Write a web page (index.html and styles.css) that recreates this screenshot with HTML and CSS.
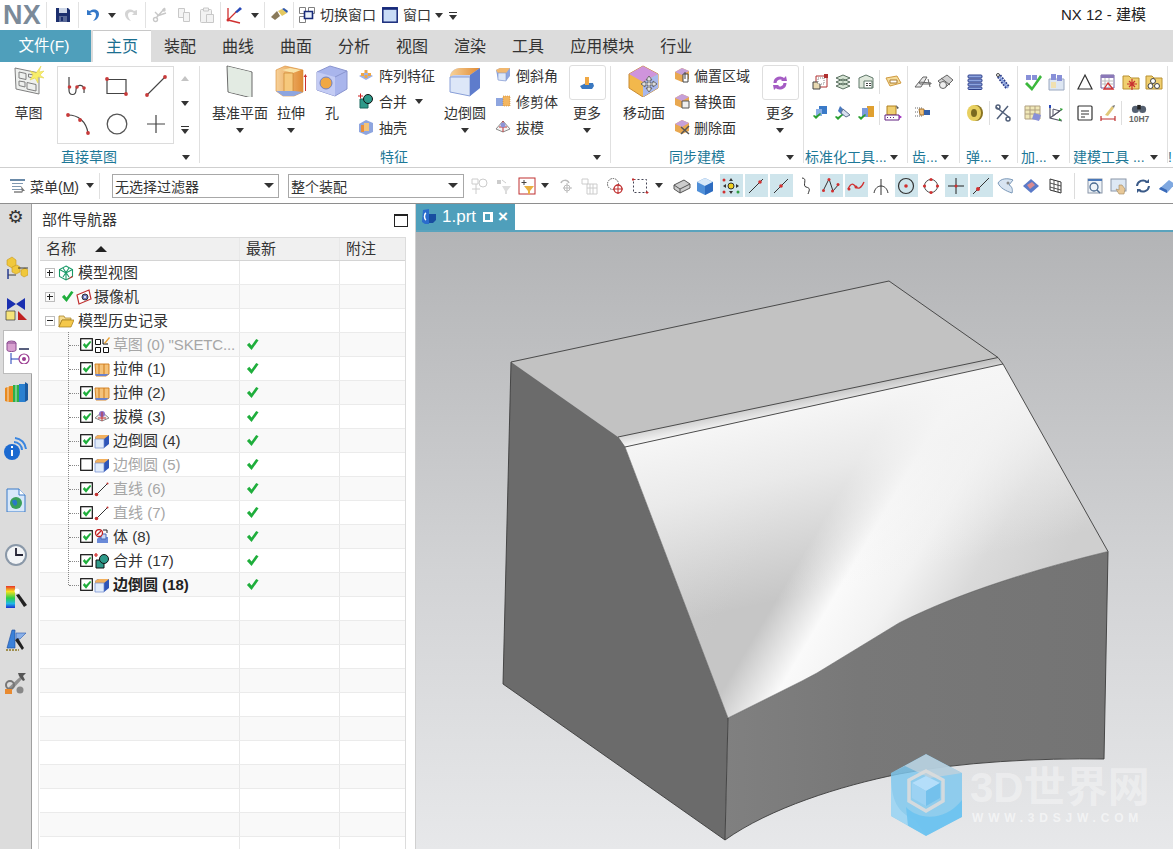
FILE: index.html
```html
<!DOCTYPE html>
<html lang="zh">
<head>
<meta charset="utf-8">
<title>NX 12 - 建模</title>
<link rel="stylesheet" href="styles.css">
</head>
<body>
<svg class="defs" width="0" height="0" aria-hidden="true">
<defs>
<linearGradient id="cubeTop" x1="0" y1="0" x2="0" y2="1"><stop offset="0" stop-color="#bcd0f4"/><stop offset="1" stop-color="#7b96dc"/></linearGradient>
<linearGradient id="amber" x1="0" y1="0" x2="1" y2="0"><stop offset="0" stop-color="#f7d29a"/><stop offset="1" stop-color="#e08a33"/></linearGradient>
<linearGradient id="rainbow" x1="0" y1="0" x2="0" y2="1"><stop offset="0" stop-color="#e8332a"/><stop offset=".25" stop-color="#f5e020"/><stop offset=".55" stop-color="#2bd04a"/><stop offset=".8" stop-color="#21b8e8"/><stop offset="1" stop-color="#1a2fd0"/></linearGradient>

<symbol id="save" viewBox="0 0 16 16"><path d="M1 1h12l2 2v12H1z" fill="#1c2f6e"/><path d="M4 1h8v5H4z" fill="#cfd8e8"/><path d="M4 9h8v6H4z" fill="#5a6a98"/><path d="M6 10h2v4H6z" fill="#1c2f6e"/></symbol>
<symbol id="undo" viewBox="0 0 16 16"><path d="M2 3v5h5L5 6c3-2 6-1 6 2 0 2-1 4-3 6 4-1 6-4 6-7 0-4-5-6-9-3z" fill="#3478c8"/></symbol>
<symbol id="redo" viewBox="0 0 16 16"><path d="M14 3v5H9l2-2C8 4 5 5 5 8c0 2 1 4 3 6-4-1-6-4-6-7 0-4 5-6 9-3z" fill="#d4d4d4"/></symbol>
<symbol id="cut" viewBox="0 0 16 16"><g fill="none" stroke="#c8c8c8" stroke-width="1.4"><path d="M13 1 4 11M14 6 5 9M3 5l4 4"/><circle cx="3.5" cy="12.5" r="2"/><circle cx="12" cy="3" r="1"/></g></symbol>
<symbol id="copy" viewBox="0 0 16 16"><g fill="#f4f4f4" stroke="#c8c8c8"><path d="M2.500 1.500h6v9h-6z"/><path d="M7.500 5.500h6v9h-6z"/></g></symbol>
<symbol id="paste" viewBox="0 0 16 16"><g fill="#f2f2f2" stroke="#c8c8c8"><rect x="1.500" y="2.500" width="11" height="13" rx="1"/><path d="M4.500 1h5v3h-5z"/><path d="M7.500 7.500h7v8h-7z"/></g></symbol>
<symbol id="wcs" viewBox="0 0 18 18"><g fill="none" stroke="#d03030" stroke-width="1.300"><path d="M3 2v12M3 14l12 3M3 14 12 5"/></g><path d="m10 6 5-5 2 2-5 4z" fill="#2848b8"/><circle cx="3" cy="14" r="1.500" fill="#d03030"/></symbol>
<symbol id="brush" viewBox="0 0 18 14"><path d="m1 9 6-6 3 5-5 4z" fill="#8a7a5a"/><path d="m8 3 4-2 5 4-5 3z" fill="#e4c860"/><path d="M12 1l5 4 1-2-4-3z" fill="#3058a8"/></symbol>
<symbol id="switch" viewBox="0 0 16 16"><g fill="#fff" stroke="#808080"><path d="M.5.500h6v6h-6zM.5 9.500h6v6h-6z"/></g><path d="M9.500.500h6v6h-6z" fill="#fff" stroke="#808080"/><path d="M5.500 4.500h8v7h-8z" fill="#e8f0fa" stroke="#16297a" stroke-width="1.600"/></symbol>
<symbol id="win" viewBox="0 0 16 16"><rect x=".8" y=".8" width="14.400" height="14.400" fill="#c9dcf6" stroke="#16297a" stroke-width="1.500"/><path d="M.8.800h14.400v2H.8z" fill="#16297a"/></symbol>
<symbol id="menuic" viewBox="0 0 18 16"><path d="M1 1h15v2H1z" fill="#6a8aa8"/><path d="M3 5h11v1H3zM3 8h9v1H3zM3 11h10v1H3z" fill="#8098b0"/><path d="M5 13h8v2H5z" fill="#a0a0a0"/><path d="m12 8 4 5-2 0-1 2z" fill="#777"/></symbol>

<symbol id="sketch" viewBox="0 0 32 32"><path d="M2 3 26 8v21L3 24z" fill="#eef0ee" stroke="#808080"/><g fill="none" stroke="#808080"><path d="M6 7l7 1.500v6L6 13zM15.500 9l5 1v3l-5-1zM6 16l6 1v5l-6-1.500zM14 17.500l9 2v6.500l-9-2z"/></g><path d="m28 1-2 6 5-1-4 4 4 3-6-1 0 6-3-5-5 2 3-5-3-4 6 2z" fill="#f7ee6a" stroke="#e0d040" stroke-width=".5"/></symbol>
<symbol id="datum" viewBox="0 0 32 32"><path d="M3 1 28 7v26L4 27z" fill="#dfe8e0" stroke="#6a6a6a"/><path d="M4 1.500 27 7v25L5 27z" fill="#e3ebe3"/></symbol>
<symbol id="extrude" viewBox="0 0 32 32"><path d="M1 5 10 1l18 4v22l-9 4H8l-7-5z" fill="url(#amber)" stroke="#d88a30" stroke-width=".6"/><path d="M7 5 15 3 26 5 18 8z" fill="#f9e3a8"/><path d="M9 8h9v19H9z" fill="#f6c87c" stroke="#c87e24" stroke-width=".6"/><path d="M1 26l7 5h11l9-4-9-1H8z" fill="#8ea5df"/><path d="M30 26V12h-1.500l2-3 1.500 3H31v14z" fill="#c83030"/></symbol>
<symbol id="hole" viewBox="0 0 32 32"><path d="M1 7 14 1l17 5v18l-12 7-18-6z" fill="#a9b5ec" stroke="#8a95cf"/><path d="M1 7 19 12v19L1 25z" fill="#c4ccf4"/><circle cx="10" cy="18" r="6" fill="#f0a844" stroke="#7080c0"/><path d="M19 12 31 6" stroke="#8a95cf"/></symbol>
<symbol id="fillet" viewBox="0 0 32 32"><path d="M1 12C1 6 6 3 12 3h19v20l-10 8-20-4z" fill="#c2d0f2"/><path d="M1 12C1 7 6 3 11 3L31 3 21 10H6C3 10 2 12 1 12z" fill="url(#amber)"/><path d="M1 12h20v19L1 27z" fill="#dde7f8" stroke="#8aa0d8"/><path d="m21 10 10-7v20l-10 8z" fill="#5e7ccc"/></symbol>
<symbol id="moveface" viewBox="0 0 32 32"><path d="M1 9 15 1l15 8v14l-15 9L1 23z" fill="#f2b84c" stroke="#c98a30"/><path d="M15 1l15 8-15 8L1 9z" fill="#cf94dc"/><path d="M15 17l15-8v14l-15 9z" fill="#a8b8ee"/><path d="M19 13l3-4 3 4h-2v3h3v-2l4 3-4 3v-2h-3v3h2l-3 4-3-4h2v-3h-3v2l-4-3 4-3v2h3v-3z" transform="translate(-1 2)" fill="#ddd" stroke="#555" stroke-width=".8"/></symbol>
<symbol id="pattern" viewBox="0 0 16 16"><path d="M1 9 8 5l7 4-7 4z" fill="#9fb2e6"/><g fill="#f0a844"><path d="M3 6h3v3H3zM10 6h3v3h-3zM6.500 3h3v3h-3zM6.500 8h3v3h-3z"/></g></symbol>
<symbol id="unite" viewBox="0 0 16 16"><path d="M2 6h8v9H2z" fill="#2e9a8a" stroke="#16675c"/><circle cx="10" cy="6" r="4.500" fill="#2e9a8a" stroke="#111"/><path d="M1 .5h1v2h2v1H2v2H1v-2H-1v-1h2z" fill="#d02020" transform="translate(1)"/></symbol>
<symbol id="shell" viewBox="0 0 16 16"><path d="M1 5 8 1l7 3v9l-7 3-7-3z" fill="#8ea5df"/><path d="M6 4h5v8H6z" fill="#f3c47a"/><path d="M3 6h3v7H3z" fill="#e98f3b"/></symbol>
<symbol id="chamfer" viewBox="0 0 16 16"><path d="M1 3 5 1h10v8l-4 5-8-1z" fill="#8ea5df"/><path d="M1 3 5 1h10l-4 5H3z" fill="#f1b870"/><path d="M3 6h8v8l-8-1z" fill="#dde7f8" stroke="#7d93cf" stroke-width=".6"/></symbol>
<symbol id="trim" viewBox="0 0 16 16"><path d="M1 5h8v8H1z" fill="#8ea5df"/><path d="M8 3h7v10H8z" fill="#f3b660" stroke="#c9842e" stroke-width=".6" stroke-dasharray="1 1"/></symbol>
<symbol id="draft" viewBox="0 0 16 16"><path d="M1 10 8 2l7 8-7 3z" fill="#f4f4f4" stroke="#8a8a8a"/><path d="M8 2v11M4 8h8" stroke="#c03030" fill="none"/><circle cx="8" cy="6" r="2.500" fill="#8e94d8"/></symbol>
<symbol id="more" viewBox="0 0 16 16"><path d="M1 11 7 8h7l1 3-2 3H3z" fill="#3a78c0"/><path d="M6 2h4v8H6z" fill="#f0a844"/></symbol>
<symbol id="offset" viewBox="0 0 16 16"><path d="M1 5 8 1l7 3v8l-7 3-7-3z" fill="#e9a850"/><path d="M8 1l7 3-7 4-7-3z" fill="#c6a0d8"/><path d="M9 7h5v8H9z" fill="#fff" stroke="#444"/><path d="M11 5v7" stroke="#444"/></symbol>
<symbol id="replace" viewBox="0 0 16 16"><path d="M1 5 8 1l7 3v8l-7 3-7-3z" fill="#e9a850"/><path d="M8 1l7 3-7 4-7-3z" fill="#c6a0d8"/><path d="M8 8h7v7H8z" fill="#eee" stroke="#555"/></symbol>
<symbol id="del" viewBox="0 0 16 16"><path d="M1 5 8 1l7 3v8l-7 3-7-3z" fill="#e9a850"/><path d="M8 1l7 3-7 4-7-3z" fill="#c6a0d8"/><path d="m7 8 8 7M15 7l-8 8" stroke="#555" stroke-width="1.500"/></symbol>
<symbol id="sync" viewBox="0 0 16 16"><g fill="none" stroke="#a55cc4" stroke-width="3"><path d="M3 8a5 5 0 0 1 9-3"/><path d="M13 8a5 5 0 0 1-9 3"/></g><path d="m9 6 6 0-1-5zM7 10l-6 0 1 5z" fill="#a55cc4"/></symbol>

<symbol id="s1" viewBox="0 0 18 18"><path d="M4 3h11v11H4z" fill="none" stroke="#b03030"/><g fill="#b03030"><path d="M12 1h4v4h-4z"/></g><path d="M1 9h7v7H1z" fill="#e8d8b0" stroke="#444"/><path d="M6 5h6v6H6z" fill="#fff" stroke="#888" stroke-dasharray="1 1"/></symbol>
<symbol id="s2" viewBox="0 0 18 18"><g fill="#d6e4d4" stroke="#5a7060"><path d="m2 5 7-3 7 3-7 3zM2 9l7-3 7 3-7 3zM2 13l7-3 7 3-7 3z"/></g></symbol>
<symbol id="s3" viewBox="0 0 18 18"><path d="m2 5 7-3 7 3v10H2z" fill="#dfe8dc" stroke="#60786a"/><path d="M7 8h8v7H7z" fill="#fff" stroke="#60786a"/><path d="M9 10h2v1H9zM12 10h2v1h-2zM9 12h2v1H9zM12 12h2v1h-2z" fill="#444"/></symbol>
<symbol id="s4" viewBox="0 0 18 18"><path d="M2 5l11-2 4 7-11 3z" fill="#f5dc9a" stroke="#d09a40"/><path d="M6 7h7v3H6z" fill="#fff" stroke="#a87a30"/></symbol>
<symbol id="s5" viewBox="0 0 18 18"><path d="M7 2h8v8H7z" fill="#3a7ac8"/><path d="M4 5h6v7H4z" fill="#88aee4"/><path d="m1 12 3 3 5-5-1-1-4 3-2-1z" fill="#2aa030"/></symbol>
<symbol id="s6" viewBox="0 0 18 18"><path d="m6 2 6 6-3 4-5-5z" fill="#4a7ac0"/><path d="m9 5 7 6-4 2-5-4z" fill="#d8e0f0" stroke="#607090"/><path d="m1 13 3 3 5-5-1-1-4 3-2-1z" fill="#2aa030"/></symbol>
<symbol id="s7" viewBox="0 0 18 18"><path d="M5 4h12v9H5z" fill="#f0c040"/><path d="M10 2h7v11h-7z" fill="#e0a030"/><path d="M5 4h6v9H5z" fill="#7a9ada"/><path d="m1 13 3 3 5-5-1-1-4 3-2-1z" fill="#2aa030"/></symbol>
<symbol id="s8" viewBox="0 0 18 18"><path d="M3 2h9v9H3z" fill="#f0cf70" stroke="#b08020"/><path d="M1 11h14v5H1z" fill="#fff" stroke="#602080"/><path d="M3 13h1v1H3zM6 13h1v1H6zM9 13h1v1H9z" fill="#602080"/><path d="m15 11 3 2-3 2z" fill="#a030c0"/><path d="m12 1 3 3-2 1z" fill="#555"/></symbol>
<symbol id="g1" viewBox="0 0 18 18"><path d="M1 14 9 4h4l-6 10z" fill="#e8e8e8" stroke="#666"/><path d="m5 9 12 1v1H6zM14 6l2 8" stroke="#666" fill="none"/></symbol>
<symbol id="g2" viewBox="0 0 18 18"><path d="m2 8 9-6 6 5-8 8z" fill="#d0d0d0" stroke="#666"/><circle cx="7" cy="12" r="3.500" fill="#eee" stroke="#666"/><path d="m5 5 9 7" stroke="#666"/></symbol>
<symbol id="g3" viewBox="0 0 18 18"><path d="M1 4h7M1 8h7M1 12h7" stroke="#666" stroke-dasharray="1 1"/><path d="M5 5h5v6H6z" fill="#f2c27a" stroke="#a07030"/><path d="M10 6h6v5h-6z" fill="#3460a8"/></symbol>
<symbol id="p1" viewBox="0 0 18 18"><g fill="#8ea5df" stroke="#2c3e8a"><rect x="2" y="2" width="14" height="3" rx="1"/><rect x="2" y="6" width="14" height="3" rx="1"/><rect x="2" y="10" width="14" height="3" rx="1"/><rect x="2" y="14" width="14" height="2.500" rx="1"/></g></symbol>
<symbol id="p2" viewBox="0 0 18 18"><path d="M5 3 14 15" stroke="#2c3e8a" stroke-width="5" stroke-dasharray="2 1"/><path d="M5 3 14 15" stroke="#8ea5df" stroke-width="2"/><circle cx="4" cy="2" r="1.500" fill="none" stroke="#444"/></symbol>
<symbol id="p3" viewBox="0 0 18 18"><ellipse cx="10" cy="9" rx="7" ry="8" fill="#8a7420"/><ellipse cx="8" cy="9" rx="7" ry="8" fill="#e8d060"/><ellipse cx="8" cy="9" rx="3" ry="4" fill="#7a6a20"/></symbol>
<symbol id="p4" viewBox="0 0 18 18"><g fill="none" stroke="#52607a" stroke-width="1.500"><path d="m2 3 14 11M14 2 3 15"/><circle cx="4" cy="3" r="2"/><circle cx="14" cy="15" r="2"/></g></symbol>
<symbol id="a1" viewBox="0 0 18 18"><path d="M2 2h5v5H2zM8 2h5v5H8z" fill="#8890d8"/><path d="m3 9 5 5 8-12 2 2-10 14-7-7z" fill="#3cb83c"/></symbol>
<symbol id="a2" viewBox="0 0 18 18"><path d="M2 6h15v11H2z" fill="#dde6f2" stroke="#9aa8c0"/><path d="M4 1h5v6H4zM10 2h5v6h-5z" fill="#8890d8"/><path d="M4 9h5v6H4z" fill="#f0e0b0"/></symbol>
<symbol id="a3" viewBox="0 0 18 18"><path d="M1 2h15v13H1z" fill="#f0e8b8" stroke="#b0a080"/><path d="M1 6h15M1 10h15M6 2v13M11 2v13" stroke="#b0a080"/><path d="m10 9 7 2-2 6-7-2z" fill="#8890d8"/></symbol>
<symbol id="a4" viewBox="0 0 18 18"><path d="M3 2v12l12 3M3 14 14 6" fill="none" stroke="#556" stroke-width="1.200"/><path d="M6 5v7l7-5z" fill="none" stroke="#556"/><path d="m13 4 3 1-2 2zM12 14l3 2-3 1z" fill="#2aa030"/><path d="M2 1h2v3H2z" fill="#2848b8"/></symbol>
<symbol id="m1" viewBox="0 0 18 18"><path d="M9 2 16 16H2z" fill="#fff" stroke="#333" stroke-width="1.200"/></symbol>
<symbol id="m2" viewBox="0 0 18 18"><path d="M2 2h13v13H2z" fill="#fff" stroke="#7060a0"/><path d="M2 2h13v3H2z" fill="#8a78b8"/><path d="M2 8h13M2 11h13M6 5v10M10 5v10" stroke="#bbb"/><path d="m9 10 5 6H5z" fill="none" stroke="#d03030" stroke-width="1.300"/></symbol>
<symbol id="m3" viewBox="0 0 18 18"><path d="M1 3h6l2 2h8v11H1z" fill="#f0cf70" stroke="#b89030"/><path d="M10 6v11M5 11h10M7 8l6 6M13 8l-6 6" stroke="#c83030" stroke-width="1.200"/></symbol>
<symbol id="m4" viewBox="0 0 18 18"><path d="M1 3h6l2 2h8v11H1z" fill="#f0cf70" stroke="#b89030"/><g fill="#fff" stroke="#444"><circle cx="8" cy="8" r="2.500"/><circle cx="5.500" cy="13" r="2.500"/><circle cx="12" cy="13" r="2.500"/></g></symbol>
<symbol id="m5" viewBox="0 0 18 18"><rect x="2" y="2" width="14" height="14" rx="1" fill="#fff" stroke="#333" stroke-width="1.200"/><path d="M5 7h8M5 10h8M5 13h4" stroke="#333"/></symbol>
<symbol id="m6" viewBox="0 0 18 18"><path d="M2 12v5M16 12v5M2 15h14" stroke="#c03030" stroke-width="1.200"/><path d="M6 11 13 2l2 2-6 8z" fill="#e0c878"/><path d="m13 2 2 2 1-3z" fill="#777"/></symbol>
<symbol id="m7" viewBox="0 0 18 12"><circle cx="5" cy="7" r="4" fill="#556070"/><circle cx="13" cy="7" r="4" fill="#556070"/><path d="M7 2h4v5H7z" fill="#222"/></symbol>

<symbol id="mf" viewBox="0 0 18 18"><path d="M1 2h6v5H1z" fill="none" stroke="#ccc"/><circle cx="12" cy="6" r="4" fill="none" stroke="#ccc"/><path d="M5 7v10M1 12h8" stroke="#ccc"/></symbol>
<symbol id="mg" viewBox="0 0 18 18"><path d="M3 3h4v4H3z" fill="#ccc"/><path d="M8 9h9l-4 5v3h-2v-3z" fill="#ddd"/><path d="M8 3l4 3" stroke="#ccc"/></symbol>
<symbol id="sel" viewBox="0 0 18 18"><rect x="1" y="1" width="16" height="16" fill="#fff" stroke="#c03030"/><path d="M6 3v5M3.500 5.500h5" stroke="#444"/><path d="M6 9h10l-4 5v3h-2v-3z" fill="#e9b040"/></symbol>
<symbol id="rot" viewBox="0 0 18 18"><path d="M3 6c1-3 6-4 8 0" fill="none" stroke="#bbb" stroke-width="1.500"/><path d="M9 6v10M5 11h9" stroke="#bbb"/><circle cx="9" cy="11" r="3" fill="none" stroke="#bbb"/></symbol>
<symbol id="grid2" viewBox="0 0 18 18"><path d="M1 2h6v5H1zM6 7h10v10H6z" fill="none" stroke="#ccc"/><path d="M9 7v10M12 7v10M6 11h10" stroke="#ccc"/></symbol>
<symbol id="csel" viewBox="0 0 18 18"><circle cx="7" cy="7" r="5.500" fill="none" stroke="#555" stroke-dasharray="1.500 1"/><circle cx="12" cy="12" r="4" fill="#fff" stroke="#c03030" stroke-width="1.300"/><path d="M12 7v10M7 12h10" stroke="#c03030"/></symbol>
<symbol id="rsel" viewBox="0 0 18 18"><path d="M2.500 2.500h13v13h-13z" fill="none" stroke="#445" stroke-dasharray="2 2"/><path d="M2 1v3M1 2.500h3M16 14v3M14.500 15.500h3" stroke="#c03030"/></symbol>
<symbol id="box1" viewBox="0 0 18 18"><path d="M1 8 11 3l6 4v4L7 16l-6-4z" fill="#ccc" stroke="#555"/><path d="M1 8l6 4 10-5M7 12v4" fill="none" stroke="#555"/></symbol>
<symbol id="box2" viewBox="0 0 18 18"><path d="m1 5 8-4 8 4v9l-8 4-8-4z" fill="#4f8fd8"/><path d="m1 5 8 4 8-4-8-4z" fill="#d8e8f8"/><path d="M9 9v9l8-4V5z" fill="#2e6cc0"/></symbol>
<symbol id="t1" viewBox="0 0 18 18"><circle cx="9" cy="9" r="3" fill="#f0d020" stroke="#333"/><g fill="#333"><path d="m9 1 2 3H7zM9 17l-2-3h4zM1 9l3-2v4zM17 9l-3 2V7z"/></g><g fill="#d03030"><circle cx="2" cy="3" r="1.500"/><circle cx="2" cy="15" r="1.500"/></g><circle cx="16" cy="15" r="1.500" fill="#30a040"/></symbol>
<symbol id="t2" viewBox="0 0 18 18"><path d="M2 16 16 2" stroke="#333"/><circle cx="13" cy="5" r="1.800" fill="#d03030"/></symbol>
<symbol id="t3" viewBox="0 0 18 18"><path d="M2 16 16 2" stroke="#333"/><circle cx="9" cy="9" r="1.800" fill="#d03030"/></symbol>
<symbol id="t4" viewBox="0 0 18 18"><path d="M5 1c6 0 0 8 4 9s4 2 2 7" fill="none" stroke="#333"/><circle cx="9" cy="9" r="0" fill="#c03030"/></symbol>
<symbol id="t5" viewBox="0 0 18 18"><path d="M1 14 7 2l4 12 6-7" fill="none" stroke="#333"/><g fill="#d03030"><circle cx="7" cy="2.500" r="1.500"/><circle cx="1.500" cy="13.500" r="1.500"/><circle cx="10.500" cy="14" r="1.500"/><circle cx="16" cy="7.500" r="1.500"/></g></symbol>
<symbol id="t6" viewBox="0 0 18 18"><path d="M1 12c4-8 6-4 8-2s5 2 8-5" fill="none" stroke="#d03030" stroke-width="1.300"/><g fill="#d03030"><circle cx="2" cy="12" r="1.500"/><circle cx="9" cy="10" r="1.500"/></g></symbol>
<symbol id="t7" viewBox="0 0 18 18"><path d="M9 2v16M2 16c1-5 4-7 7-7s6 2 7 7" fill="none" stroke="#333"/></symbol>
<symbol id="t8" viewBox="0 0 18 18"><circle cx="9" cy="9" r="7.500" fill="none" stroke="#333" stroke-width="1.200"/><circle cx="9" cy="9" r="1.800" fill="#d03030"/></symbol>
<symbol id="t9" viewBox="0 0 18 18"><circle cx="9" cy="9" r="6.500" fill="none" stroke="#444"/><g fill="#d03030"><circle cx="9" cy="2.500" r="1.600"/><circle cx="9" cy="15.500" r="1.600"/><circle cx="2.500" cy="9" r="1.600"/><circle cx="15.500" cy="9" r="1.600"/></g></symbol>
<symbol id="t10" viewBox="0 0 18 18"><path d="M9 1v16M1 9h16" stroke="#222"/><circle cx="9" cy="9" r="1.500" fill="#d03030"/></symbol>
<symbol id="t11" viewBox="0 0 18 18"><path d="M1 17 17 1" stroke="#333"/><circle cx="6" cy="12" r="2" fill="#d03030"/></symbol>
<symbol id="t12" viewBox="0 0 18 18"><path d="M1 6c3-5 10-5 15-3l-4 5c3 1 4 5 3 8-6-2-12-5-14-10z" fill="#d8e4f2" stroke="#7a98b8"/><circle cx="11" cy="6" r="1.500" fill="#888"/></symbol>
<symbol id="t13" viewBox="0 0 18 18"><path d="m1 9 8-7 8 7-8 7z" fill="#5a7ac8"/><path d="m5 8 5-3 3 3-5 4z" fill="#d88a90"/></symbol>
<symbol id="t14" viewBox="0 0 18 18"><path d="m3 2 11 3v11L3 13z" fill="#fff" stroke="#333"/><path d="m3 6 11 3M3 10l11 3M7 3v11M11 4v11" stroke="#333" stroke-width=".8"/></symbol>
<symbol id="v1" viewBox="0 0 18 18"><rect x="2" y="2" width="14" height="14" fill="#eef3f8" stroke="#8a96a8"/><path d="M2 2h14v2H2z" fill="#4a78b8"/><circle cx="8" cy="10" r="4" fill="none" stroke="#4a6a90" stroke-width="1.300"/><path d="m11 13 3 3" stroke="#4a6a90" stroke-width="1.500"/></symbol>
<symbol id="v2" viewBox="0 0 18 18"><rect x="1" y="2" width="15" height="12" fill="#dde8f4" stroke="#8a96a8"/><path d="M9 8h3l3 4-1 5H9l-3-5 3 1z" fill="#e8c898" stroke="#a08860" stroke-width=".6"/></symbol>
<symbol id="v3" viewBox="0 0 18 18"><g fill="none" stroke="#3a5a88" stroke-width="2"><path d="M3 9a6 6 0 0 1 10-4"/><path d="M15 9a6 6 0 0 1-10 4"/></g><path d="m11 6 4 0 0-4zM7 12l-4 0 0 4z" fill="#3a5a88"/></symbol>
<symbol id="v4" viewBox="0 0 18 18"><path d="m1 12 10-9 6 4-8 9z" fill="#7fa8e0"/><path d="m1 12 8 4 0-3-6-3z" fill="#3a6ab8"/></symbol>

<symbol id="plus" viewBox="0 0 24 24"><path d="M12 3v18M3 12h18" stroke="#444" stroke-width="1.200"/></symbol>
<symbol id="circle" viewBox="0 0 24 24"><circle cx="12" cy="12" r="9.800" fill="none" stroke="#555" stroke-width="1.300"/></symbol>
<symbol id="spline" viewBox="0 0 24 24"><path d="M3 3v13c0 6 7 6 7 0 0-5 7-7 8-1 .2 1.500 0 3 0 4" fill="none" stroke="#444" stroke-width="1.200"/><g fill="#c83a3a"><circle cx="3.500" cy="13" r="1.800"/><circle cx="11" cy="13" r="1.800"/><circle cx="18" cy="14" r="1.800"/></g></symbol>
<symbol id="rect" viewBox="0 0 24 24"><path d="M2 5.500h19v14H2z" fill="none" stroke="#444" stroke-width="1.200"/><circle cx="2" cy="5" r="1.900" fill="#c83a3a"/><circle cx="21" cy="20" r="1.900" fill="#c83a3a"/></symbol>
<symbol id="line" viewBox="0 0 24 24"><path d="M3 21 21 3" stroke="#444" stroke-width="1.100"/><circle cx="3" cy="21" r="1.900" fill="#c83a3a"/><circle cx="21" cy="3" r="1.900" fill="#c83a3a"/></symbol>
<symbol id="arc" viewBox="0 0 24 24"><path d="M2 3c10 0 18 6 20 18" fill="none" stroke="#444" stroke-width="1.200"/><circle cx="2" cy="3" r="1.900" fill="#c83a3a"/><circle cx="14" cy="8" r="1.900" fill="#c83a3a"/><circle cx="22" cy="21" r="1.900" fill="#c83a3a"/></symbol>

<symbol id="ck" viewBox="0 0 14 14"><path d="M1 7.500 3.500 5l2.500 3L11 1l2.500 1.500L6 13z" fill="#1fae3c"/></symbol>
<symbol id="cb" viewBox="0 0 14 14"><rect x=".75" y=".75" width="12.500" height="12.500" fill="#fff" stroke="#111" stroke-width="1.300"/><path d="M3 7.500 5 5.500l1.500 2L11 3l1 1.500L6.500 11.500z" fill="#1fae3c"/></symbol>
<symbol id="cb0" viewBox="0 0 14 14"><rect x=".75" y=".75" width="12.500" height="12.500" fill="#fff" stroke="#111" stroke-width="1.300"/></symbol>
<symbol id="modelview" viewBox="0 0 16 16"><g fill="none" stroke="#1a9a68" stroke-width="1.100"><path d="m8 1 6.500 3.500v7L8 15l-6.500-3.500v-7z"/><path d="M1.500 4.500 8 8l6.500-3.500M8 8v7M5 3l6 9M11 3l-6 9"/></g><path d="m9 15 6-3-1-1z" fill="#d03030"/></symbol>
<symbol id="camera" viewBox="0 0 16 16"><path d="M1 6 13 1l2 9-12 5z" fill="#fff" stroke="#c03030" stroke-width="1.200"/><circle cx="9" cy="8" r="3" fill="#6a78c0" stroke="#333"/><circle cx="9" cy="8" r="1" fill="#fff"/></symbol>
<symbol id="folder" viewBox="0 0 16 16"><path d="M1 3h5l1 2h6v2H4L1 14z" fill="#f6dc90" stroke="#a07818" stroke-width=".7"/><path d="M4 7h12l-3 7H1z" fill="#f5c84a" stroke="#a07818" stroke-width=".7"/></symbol>
<symbol id="sk2" viewBox="0 0 16 16"><g fill="#fff" stroke="#111"><path d="M1.500 2.500h5v5h-5zM1.500 10.500h5v5h-5zM9.500 10.500h5v5h-5z"/></g><path d="M9 2v5M9 7h5" stroke="#111"/><path d="m10 6 5-6 1 1-5 6z" fill="#e9a030"/></symbol>
<symbol id="ext2" viewBox="0 0 16 16"><path d="M1 3h14v10l-3 2H2z" fill="#f4c27a" stroke="#d07a18" stroke-width=".9"/><path d="M5 3v10M10 3v10" stroke="#d07a18"/><path d="M1 13h11l3 0-3 2H2z" fill="#6a82cc"/></symbol>
<symbol id="draft2" viewBox="0 0 16 16"><path d="M1 9 8 3l7 6-7 3z" fill="#eee" stroke="#888"/><circle cx="8" cy="5" r="3" fill="#8e72c8"/><path d="M8 3v9M4 9h8" stroke="#c03030"/></symbol>
<symbol id="fil2" viewBox="0 0 16 16"><path d="M1 6c0-3 2-4 5-4h9v9l-5 4H1z" fill="#2f55b8"/><path d="M1 6c0-3 2-4 5-4h9l-5 4z" fill="#f3b05c"/><path d="M1 6h9v9H1z" fill="#e2ecfa" stroke="#6c86cc" stroke-width=".7"/></symbol>
<symbol id="line2" viewBox="0 0 16 16"><path d="M2 14 14 2" stroke="#333"/><circle cx="2.500" cy="13.500" r="1.800" fill="#c03030"/><circle cx="13.500" cy="2.500" r="1" fill="#c03030"/></symbol>
<symbol id="body" viewBox="0 0 16 16"><path d="M5 8h9v6H3V10z" fill="#6a8ad8"/><path d="M7 5h5v5H7z" fill="#c8d8f4" stroke="#4a6ab8"/><circle cx="5" cy="4" r="3.500" fill="#fff" stroke="#c02020" stroke-width="1.300"/><path d="m3 6 4-4" stroke="#c02020" stroke-width="1.300"/><path d="M9 1h4M13 1v3" stroke="#222"/></symbol>
<symbol id="merge" viewBox="0 0 16 16"><path d="M2 7h8v8H2z" fill="#2e9a8a" stroke="#111"/><circle cx="10" cy="6" r="4.500" fill="#2e9a8a" stroke="#111"/><path d="M2 0v4M0 2h4" stroke="#d02020" stroke-width="1.200"/></symbol>
<symbol id="part" viewBox="0 0 18 18"><path d="M3 2 9 1v15H5l-3-2z" fill="#2a6ccc"/><path d="M9 6h7v6l-3 3H9z" fill="#184ea0"/><path d="M6 5c-2 1-2 6 0 7" stroke="#fff" fill="none" stroke-width="1.500"/></symbol>

<symbol id="n1" viewBox="0 0 24 24"><g fill="#f0c83c" stroke="#c89820" stroke-width=".6"><path d="m3 5 5-3 4 3v5l-4 3-5-3z"/><path d="m8 12 5-2 3 2v5l-4 2-4-2z"/><path d="m17 15 4-2 3 2v5l-4 2-3-2z"/></g><path d="M4 14v10M4 20h8M14 13h10" stroke="#222" stroke-width="1" fill="none" stroke-opacity=".85"/><path d="M4 14v10" stroke="#1f3db8"/></symbol>
<symbol id="n2" viewBox="0 0 24 24"><path d="m3 1 9 6 9-6v12l-9-6-9 6z" fill="#1a2fb0"/><path d="M2 14h9v9H2z" fill="#f6e47a" stroke="#333" stroke-width=".7"/><path d="M14 14l9 9h-9z" fill="#c02020"/></symbol>
<symbol id="n3" viewBox="0 0 24 24"><ellipse cx="5.500" cy="3" rx="4.500" ry="2" fill="#d8a0d0" stroke="#8a4a90"/><path d="M1 3h9v7c0 2-9 2-9 0z" fill="#d8a0d0" stroke="#8a4a90"/><path d="M5 13v11M5 19h8M13 9h10" stroke="#1f3db8" fill="none"/><path d="M13 9h10" stroke="#222"/><circle cx="18" cy="19" r="5" fill="none" stroke="#9a3a90" stroke-width="1.200"/><circle cx="18" cy="19" r="2" fill="#9a3a90"/></symbol>
<symbol id="n4" viewBox="0 0 24 24"><path d="M1 7 6 5h3v16H4l-3-1z" fill="#e88a20"/><path d="M9 4h6v17H9z" fill="#2cb04a"/><path d="M15 3h6v18h-6z" fill="#2a80d0"/><path d="M21 1l3 2v16l-3 2z" fill="#1a5aa0"/><path d="M3 5h2v16H3zM11 4h2v17h-2z" fill="#fff" opacity=".35"/></symbol>
<symbol id="n5" viewBox="0 0 24 24"><circle cx="8" cy="16" r="8" fill="#1c6ad0"/><path d="M7 12h2v-2H7zM7 14v6h2v-6z" fill="#fff"/><g fill="none" stroke="#3a86e0" stroke-width="2"><path d="M10 6a8 8 0 0 1 8 8"/><path d="M11 2a12 12 0 0 1 11 11"/></g></symbol>
<symbol id="n6" viewBox="0 0 24 24"><path d="M3 1h12l6 6v17H3z" fill="#d8e8fa" stroke="#3a7ac8"/><path d="M15 1v6h6" fill="#fff" stroke="#3a7ac8"/><circle cx="12" cy="15" r="6" fill="#3aa05a"/><path d="M8 13c3-3 6 0 5 3s-4 2-5-3z" fill="#2a78c8"/></symbol>
<symbol id="n7" viewBox="0 0 24 24"><circle cx="12" cy="12" r="11" fill="#8a98a8"/><circle cx="12" cy="12" r="9" fill="#f2f4f6"/><path d="M12 5v7h7" fill="none" stroke="#223" stroke-width="1.800"/></symbol>
<symbol id="n8" viewBox="0 0 24 24"><path d="M2 1h9v22H2z" fill="url(#rainbow)"/><path d="m12 10 8 12 3-2-8-11z" fill="#222"/><circle cx="13" cy="6" r="2.500" fill="#fff"/></symbol>
<symbol id="n9" viewBox="0 0 24 24"><path d="M3 20 8 2h3v18z" fill="#3a80d8" stroke="#1a4aa0" stroke-width=".6"/><path d="M12 5h10L16 11h-4z" fill="#8ab0e8" stroke="#2a5ab0" stroke-width=".6"/><path d="m11 12 7 10 2-2-6-10z" fill="#222"/><path d="M2 22h13" stroke="#a09050" stroke-width="2" stroke-dasharray="2 1"/></symbol>
<symbol id="n10" viewBox="0 0 24 24"><path d="M3 19 17 6l2 2L6 22z" fill="#909090"/><path d="M14 3h8l-3 3 2 4-2 1-4-5z" fill="#555"/><circle cx="6" cy="15" r="4" fill="none" stroke="#777" stroke-width="2"/><path d="M1 19h7v5H1z" fill="#e88a30"/><circle cx="16" cy="20" r="3.500" fill="#888"/></symbol>
</defs>
</svg>

<header class="titlebar">
  <div class="nx-logo">NX</div><i class="vsep"></i>
  <span class="cell"><svg class="i16"><use href="#save"/></svg></span><i class="vsep"></i>
  <span class="cell"><svg class="i16"><use href="#undo"/></svg></span>
  <span class="cell"><i class="caret"></i></span>
  <span class="cell"><svg class="i16"><use href="#redo"/></svg></span><i class="vsep"></i>
  <span class="cell"><svg class="i16"><use href="#cut"/></svg></span>
  <span class="cell"><svg class="i16"><use href="#copy"/></svg></span>
  <span class="cell"><svg class="i16"><use href="#paste"/></svg></span><i class="vsep"></i>
  <span class="cell"><svg class="i18"><use href="#wcs"/></svg></span>
  <span class="cell"><i class="caret"></i></span><i class="vsep"></i>
  <span class="cell"><svg class="i18"><use href="#brush"/></svg></span><i class="vsep"></i>
  <span class="cell"><svg class="i16"><use href="#switch"/></svg></span>
  <span class="qtext">切换窗口</span>
  <span class="cell"><svg class="i16"><use href="#win"/></svg></span>
  <span class="qtext">窗口</span>
  <span class="cell"><i class="caret"></i></span>
  <span class="cell"><i class="more-caret"></i></span>
  <span class="app-title">NX 12 - 建模</span>
</header>

<nav class="tabs">
  <a class="file-tab">文件(F)</a>
  <a class="tab active">主页</a><a class="tab">装配</a><a class="tab">曲线</a><a class="tab">曲面</a><a class="tab">分析</a><a class="tab">视图</a><a class="tab">渲染</a><a class="tab">工具</a><a class="tab">应用模块</a><a class="tab">行业</a>
</nav>

<section class="ribbon">
  <div class="group g1">
    <div class="body">
      <div class="big sketch-btn"><svg class="i32"><use href="#sketch"/></svg><span>草图</span></div>
      <div class="gallery">
        <svg class="i24"><use href="#spline"/></svg><svg class="i24"><use href="#rect"/></svg><svg class="i24"><use href="#line"/></svg>
        <svg class="i24"><use href="#arc"/></svg><svg class="i24"><use href="#circle"/></svg><svg class="i24"><use href="#plus"/></svg>
      </div>
      <div class="scroller"><i class="caret up"></i><i class="caret"></i><i class="more-caret"></i></div>
    </div>
    <div class="label lb1"><span>直接草图</span><i class="caret"></i></div>
  </div>

  <div class="group g2">
    <div class="body">
      <div class="big b-datum"><svg class="i32"><use href="#datum"/></svg><span>基准平面</span><i class="caret"></i></div>
      <div class="big b-extrude"><svg class="i32"><use href="#extrude"/></svg><span>拉伸</span><i class="caret"></i></div>
      <div class="big b-hole"><svg class="i32"><use href="#hole"/></svg><span>孔</span></div>
      <div class="smalls s-a">
        <div class="small"><svg class="i16"><use href="#pattern"/></svg><span>阵列特征</span></div>
        <div class="small"><svg class="i16"><use href="#unite"/></svg><span>合并</span><i class="caret"></i></div>
        <div class="small"><svg class="i16"><use href="#shell"/></svg><span>抽壳</span></div>
      </div>
      <div class="big b-fillet"><svg class="i32"><use href="#fillet"/></svg><span>边倒圆</span><i class="caret"></i></div>
      <div class="smalls s-b">
        <div class="small"><svg class="i16"><use href="#chamfer"/></svg><span>倒斜角</span></div>
        <div class="small"><svg class="i16"><use href="#trim"/></svg><span>修剪体</span></div>
        <div class="small"><svg class="i16"><use href="#draft"/></svg><span>拔模</span></div>
      </div>
      <div class="big more"><div class="more-box"><svg class="i16"><use href="#more"/></svg></div><span>更多</span><i class="caret"></i></div>
    </div>
    <div class="label lb2"><span>特征</span><i class="caret"></i></div>
  </div>

  <div class="group g3">
    <div class="body">
      <div class="big b-move"><svg class="i32"><use href="#moveface"/></svg><span>移动面</span></div>
      <div class="smalls s-c">
        <div class="small"><svg class="i16"><use href="#offset"/></svg><span>偏置区域</span></div>
        <div class="small"><svg class="i16"><use href="#replace"/></svg><span>替换面</span></div>
        <div class="small"><svg class="i16"><use href="#del"/></svg><span>删除面</span></div>
      </div>
      <div class="big more"><div class="more-box"><svg class="i16"><use href="#sync"/></svg></div><span>更多</span><i class="caret"></i></div>
    </div>
    <div class="label lb3"><span>同步建模</span><i class="caret"></i></div>
  </div>

  <div class="group g4">
    <div class="body grid gr4">
      <svg class="i18"><use href="#s1"/></svg><svg class="i18"><use href="#s2"/></svg><svg class="i18"><use href="#s3"/></svg><i class="gsep"></i><svg class="i18"><use href="#s4"/></svg>
      <svg class="i18"><use href="#s5"/></svg><svg class="i18"><use href="#s6"/></svg><svg class="i18"><use href="#s7"/></svg><i class="gsep"></i><svg class="i18"><use href="#s8"/></svg>
    </div>
    <div class="label lb4"><span>标准化工具...</span><i class="caret"></i></div>
  </div>

  <div class="group g5">
    <div class="body grid gr5">
      <svg class="i18"><use href="#g1"/></svg><svg class="i18"><use href="#g2"/></svg>
      <svg class="i18"><use href="#g3"/></svg>
    </div>
    <div class="label lb5"><span>齿...</span><i class="caret"></i></div>
  </div>

  <div class="group g6">
    <div class="body grid gr6">
      <svg class="i18"><use href="#p1"/></svg><span></span><svg class="i18"><use href="#p2"/></svg>
      <svg class="i18"><use href="#p3"/></svg><i class="gsep"></i><svg class="i18"><use href="#p4"/></svg>
    </div>
    <div class="label lb6"><span>弹...</span><i class="caret"></i></div>
  </div>

  <div class="group g7">
    <div class="body grid gr7">
      <svg class="i18"><use href="#a1"/></svg><svg class="i18"><use href="#a2"/></svg>
      <svg class="i18"><use href="#a3"/></svg><svg class="i18"><use href="#a4"/></svg>
    </div>
    <div class="label lb7"><span>加...</span><i class="caret"></i></div>
  </div>

  <div class="group g8">
    <div class="body grid gr8">
      <svg class="i18"><use href="#m1"/></svg><svg class="i18"><use href="#m2"/></svg><svg class="i18"><use href="#m3"/></svg><svg class="i18"><use href="#m4"/></svg>
      <svg class="i18"><use href="#m5"/></svg><svg class="i18"><use href="#m6"/></svg><i class="gsep"></i><div class="h7"><svg class="h7i"><use href="#m7"/></svg><b>10H7</b></div>
    </div>
    <div class="label lb8"><span>建模工具 ...</span><i class="caret"></i></div>
  </div>
  <div class="group g9"><div class="body"></div><div class="label"><span>!</span></div></div>
</section>

<section class="toolbar">
  <div class="menu-btn"><svg class="i18"><use href="#menuic"/></svg><span>菜单(<u>M</u>)</span><i class="caret"></i></div>
  <div class="select sel1"><span>无选择过滤器</span><i class="caret"></i></div>
  <div class="select sel2"><span>整个装配</span><i class="caret"></i></div>
  <div class="tools">
    <svg class="i18"><use href="#mf"/></svg><svg class="i18"><use href="#mg"/></svg><svg class="i18"><use href="#sel"/></svg><i class="caret"></i>
    <svg class="i18"><use href="#rot"/></svg><svg class="i18"><use href="#grid2"/></svg><svg class="i18"><use href="#csel"/></svg><svg class="i18"><use href="#rsel"/></svg><i class="caret"></i>
    <svg class="i18"><use href="#box1"/></svg><svg class="i18"><use href="#box2"/></svg>
    <span class="on"><svg class="i18"><use href="#t1"/></svg></span><span class="on"><svg class="i18"><use href="#t2"/></svg></span><span class="on"><svg class="i18"><use href="#t3"/></svg></span>
    <svg class="i18"><use href="#t4"/></svg>
    <span class="on"><svg class="i18"><use href="#t5"/></svg></span><span class="on"><svg class="i18"><use href="#t6"/></svg></span>
    <svg class="i18"><use href="#t7"/></svg>
    <span class="on"><svg class="i18"><use href="#t8"/></svg></span>
    <svg class="i18"><use href="#t9"/></svg>
    <span class="on"><svg class="i18"><use href="#t10"/></svg></span><span class="on"><svg class="i18"><use href="#t11"/></svg></span>
    <svg class="i18"><use href="#t12"/></svg><svg class="i18"><use href="#t13"/></svg><svg class="i18"><use href="#t14"/></svg>
    <i class="tsep"></i>
    <svg class="i18"><use href="#v1"/></svg><svg class="i18"><use href="#v2"/></svg><svg class="i18"><use href="#v3"/></svg><svg class="i18"><use href="#v4"/></svg>
  </div>
</section>

<main class="main">
  <aside class="rail">
    <div class="slot gear">⚙</div>
    <div class="slot"><svg class="i24"><use href="#n1"/></svg></div>
    <div class="slot"><svg class="i24"><use href="#n2"/></svg></div>
    <div class="slot current"><svg class="i24"><use href="#n3"/></svg></div>
    <div class="slot"><svg class="i24"><use href="#n4"/></svg></div>
    <div class="slot"><svg class="i24"><use href="#n5"/></svg></div>
    <div class="slot"><svg class="i24"><use href="#n6"/></svg></div>
    <div class="slot"><svg class="i24"><use href="#n7"/></svg></div>
    <div class="slot"><svg class="i24"><use href="#n8"/></svg></div>
    <div class="slot"><svg class="i24"><use href="#n9"/></svg></div>
    <div class="slot"><svg class="i24"><use href="#n10"/></svg></div>
  </aside>

  <section class="navigator">
    <div class="nav-title"><span>部件导航器</span><i class="maxbox"></i></div>
    <div class="table">
      <div class="row head"><div class="c1"><span>名称</span><i class="sort"></i></div><div class="c2"><span>最新</span></div><div class="c3"><span>附注</span></div></div>
      <div class="row"><div class="c1 root"><i class="exp plus-exp"></i><svg class="i16"><use href="#modelview"/></svg><span>模型视图</span></div><div class="c2"></div><div class="c3"></div></div>
      <div class="row"><div class="c1 root cam"><i class="exp plus-exp"></i><svg class="i14"><use href="#ck"/></svg><svg class="i16"><use href="#camera"/></svg><span>摄像机</span></div><div class="c2"></div><div class="c3"></div></div>
      <div class="row"><div class="c1 root"><i class="exp"></i><svg class="i16"><use href="#folder"/></svg><span>模型历史记录</span></div><div class="c2"></div><div class="c3"></div></div>
      <div class="row"><div class="c1 leaf dim long"><svg class="i14"><use href="#cb"/></svg><svg class="i16"><use href="#sk2"/></svg><span>草图 (0) "SKETC...</span></div><div class="c2"><svg class="i14"><use href="#ck"/></svg></div><div class="c3"></div></div>
      <div class="row"><div class="c1 leaf"><svg class="i14"><use href="#cb"/></svg><svg class="i16"><use href="#ext2"/></svg><span>拉伸 (1)</span></div><div class="c2"><svg class="i14"><use href="#ck"/></svg></div><div class="c3"></div></div>
      <div class="row"><div class="c1 leaf"><svg class="i14"><use href="#cb"/></svg><svg class="i16"><use href="#ext2"/></svg><span>拉伸 (2)</span></div><div class="c2"><svg class="i14"><use href="#ck"/></svg></div><div class="c3"></div></div>
      <div class="row"><div class="c1 leaf"><svg class="i14"><use href="#cb"/></svg><svg class="i16"><use href="#draft2"/></svg><span>拔模 (3)</span></div><div class="c2"><svg class="i14"><use href="#ck"/></svg></div><div class="c3"></div></div>
      <div class="row"><div class="c1 leaf"><svg class="i14"><use href="#cb"/></svg><svg class="i16"><use href="#fil2"/></svg><span>边倒圆 (4)</span></div><div class="c2"><svg class="i14"><use href="#ck"/></svg></div><div class="c3"></div></div>
      <div class="row"><div class="c1 leaf dim"><svg class="i14"><use href="#cb0"/></svg><svg class="i16"><use href="#fil2"/></svg><span>边倒圆 (5)</span></div><div class="c2"><svg class="i14"><use href="#ck"/></svg></div><div class="c3"></div></div>
      <div class="row"><div class="c1 leaf dim"><svg class="i14"><use href="#cb"/></svg><svg class="i16"><use href="#line2"/></svg><span>直线 (6)</span></div><div class="c2"><svg class="i14"><use href="#ck"/></svg></div><div class="c3"></div></div>
      <div class="row"><div class="c1 leaf dim"><svg class="i14"><use href="#cb"/></svg><svg class="i16"><use href="#line2"/></svg><span>直线 (7)</span></div><div class="c2"><svg class="i14"><use href="#ck"/></svg></div><div class="c3"></div></div>
      <div class="row"><div class="c1 leaf"><svg class="i14"><use href="#cb"/></svg><svg class="i16"><use href="#body"/></svg><span>体 (8)</span></div><div class="c2"><svg class="i14"><use href="#ck"/></svg></div><div class="c3"></div></div>
      <div class="row"><div class="c1 leaf"><svg class="i14"><use href="#cb"/></svg><svg class="i16"><use href="#merge"/></svg><span>合并 (17)</span></div><div class="c2"><svg class="i14"><use href="#ck"/></svg></div><div class="c3"></div></div>
      <div class="row"><div class="c1 leaf last strong"><svg class="i14"><use href="#cb"/></svg><svg class="i16"><use href="#fil2"/></svg><span>边倒圆 (18)</span></div><div class="c2"><svg class="i14"><use href="#ck"/></svg></div><div class="c3"></div></div>
      <div class="row"><div class="c1"></div><div class="c2"></div><div class="c3"></div></div>
      <div class="row"><div class="c1"></div><div class="c2"></div><div class="c3"></div></div>
      <div class="row"><div class="c1"></div><div class="c2"></div><div class="c3"></div></div>
      <div class="row"><div class="c1"></div><div class="c2"></div><div class="c3"></div></div>
      <div class="row"><div class="c1"></div><div class="c2"></div><div class="c3"></div></div>
      <div class="row"><div class="c1"></div><div class="c2"></div><div class="c3"></div></div>
      <div class="row"><div class="c1"></div><div class="c2"></div><div class="c3"></div></div>
      <div class="row"><div class="c1"></div><div class="c2"></div><div class="c3"></div></div>
      <div class="row"><div class="c1"></div><div class="c2"></div><div class="c3"></div></div>
      <div class="row"><div class="c1"></div><div class="c2"></div><div class="c3"></div></div>
      <div class="row"><div class="c1"></div><div class="c2"></div><div class="c3"></div></div>
    </div>
  </section>

  <section class="graphics">
    <div class="doc-tabs">
      <div class="doc-tab"><svg class="i18"><use href="#part"/></svg><span>1.prt</span><i class="undock"></i><b>×</b></div>
    </div>
    <svg class="canvas" viewBox="416 232 757 617" preserveAspectRatio="none">
      <defs>
        <linearGradient id="bg" x1="0" y1="0" x2="0" y2="1"><stop offset="0" stop-color="#b3b4b6"/><stop offset=".55" stop-color="#d2d3d5"/><stop offset="1" stop-color="#e7e8ea"/></linearGradient>
        <linearGradient id="front" x1="0" y1="0" x2="1" y2="0"><stop offset="0" stop-color="#808080"/><stop offset=".35" stop-color="#787878"/><stop offset="1" stop-color="#747474"/></linearGradient>
        <linearGradient id="fillet2" gradientUnits="userSpaceOnUse" x1="810" y1="395" x2="813" y2="411"><stop offset="0" stop-color="#c4c4c4"/><stop offset="1" stop-color="#f6f6f6"/></linearGradient>
        <linearGradient id="sweep" gradientUnits="userSpaceOnUse" x1="660" y1="500" x2="984" y2="692">
          <stop offset="0" stop-color="#cccccc"/><stop offset=".3" stop-color="#c6c6c6"/><stop offset=".4" stop-color="#c6c6c6"/><stop offset=".53" stop-color="#fafafa"/><stop offset=".66" stop-color="#f2f2f2"/><stop offset=".82" stop-color="#dadada"/><stop offset="1" stop-color="#cfcfcf"/>
        </linearGradient>
        <linearGradient id="topband" gradientUnits="userSpaceOnUse" x1="810" y1="405" x2="850" y2="585">
          <stop offset="0" stop-color="#f6f6f6" stop-opacity="1"/><stop offset=".35" stop-color="#f2f2f2" stop-opacity=".8"/><stop offset="1" stop-color="#f0f0f0" stop-opacity="0"/>
        </linearGradient>
        <clipPath id="logoClip"><path d="M926 754 962 773V817L926 836 891 816V773z"/></clipPath>
      </defs>
      <rect x="416" y="232" width="757" height="617" fill="url(#bg)"/>
      <path d="M511 362 889 281 998 357.500 618 437z" fill="#c2c2c2"/>
      <path d="M618 437 998 357.500 1003 364 625 447z" fill="url(#fillet2)"/>
      <path d="M511 362 618 437 625 447 728 718 725 840 503 684z" fill="#6b6b6b"/>
      <path d="M728 718 802 681 817 673 899 623C960 592 1040 568 1108 551.500L1104 759C1040 758 960 762 899 774 840 786 770 808 725 840z" fill="url(#front)"/>
      <path d="M625 447 1003 364 1108 551.500C1040 568 960 592 899 623L817 673 802 681 728 718z" fill="url(#sweep)"/>
      <path d="M625 447 1003 364 1108 551.500C1040 568 960 592 899 623L817 673 802 681 728 718z" fill="url(#topband)"/>
      <g fill="none" stroke="#3c3c3c" stroke-width=".9">
        <path d="M511 362 889 281 998 357.500 1003 364 1108 551.500 1104 759C1040 758 960 762 899 774 840 786 770 808 725 840L503 684 511 362"/>
        <path d="M618 437 998 357.500M625 447 1003 364M728 718 725 840"/>
      </g>
      <g fill="none" stroke="#5a5a5a" stroke-width=".6"><path d="M618 437 625 447 728 718"/><path d="M728 718 802 681 817 673 899 623C960 592 1040 568 1108 551.500"/></g>
      <g class="wm">
        <path d="M926 754 962 773V817L926 836 891 816V773z" fill="#7cc7ee" opacity=".82"/>
        <g clip-path="url(#logoClip)">
          <path d="M891 773 926 754 962 773 930 778 905 766z" fill="#c6d2da" opacity=".75"/>
          <path d="M891 773C891 800 897 812 915 820L926 836 891 816z" fill="#a6d8f3" opacity=".8"/>
          <path d="M906 807C918 820 945 822 962 800V817L926 836 908 826z" fill="#6dc3ef" opacity=".9"/>
        </g>
        <path d="m926 771 17 9v21l-17 10-17-10v-21z" fill="none" stroke="#dcdcdc" stroke-width="3.500" opacity=".9"/>
        <path d="m926 776 14 7-14 8-14-8z" fill="#b4defa"/><path d="M912 783 926 791V806L912 798z" fill="#9cd2f3"/><path d="M940 783 926 791V806L940 798z" fill="#74c1ec"/>
        <text class="wm-big" x="970" y="802">3D世界网</text>
        <text class="wm-small" x="972" y="822">WWW.3DSJW.COM</text>
      </g>
    </svg>
  </section>
</main>
</body>
</html>
```
FILE: styles.css
```css
* { box-sizing: border-box; }
html, body { margin: 0; padding: 0; height: 100%; }
body {
  width: 1173px; height: 849px; overflow: hidden; background: #fff; color: #333;
  font-family: "Liberation Sans", "Noto Sans CJK SC", sans-serif; font-size: 14px;
}
.defs { position: absolute; }
svg { display: block; flex: none; overflow: visible; }
i { display: block; font-style: normal; }
.i14 { width: 14px; height: 14px; }
.i16 { width: 16px; height: 16px; }
.i18 { width: 18px; height: 18px; }
.i24 { width: 24px; height: 24px; }
.i32 { width: 32px; height: 32px; }
.caret { width: 0; height: 0; border: 4px solid transparent; border-top: 5px solid #333; border-bottom: 0; flex: none; }
.caret.up { border-top: 0; border-bottom: 5px solid #c4c4c4; }
.more-caret { width: 8px; height: 7px; border-top: 1px solid #333; position: relative; flex: none; }
.more-caret::after { content: ""; position: absolute; left: 0; top: 2px; border: 4px solid transparent; border-top: 5px solid #333; border-bottom: 0; }

/* title bar */
.titlebar {
  height: 30px; display: grid; align-items: center;
  grid-template-columns: 46px 1px 31px 1px 28px 10px 28px 1px 28px 19px 27px 1px 25px 18px 1px 28px 1px 26px 56px 27px 29px 13px 15px 1fr;
}
.nx-logo { font-size: 27px; line-height: 30px; font-weight: 700; color: #7b8a99; padding-left: 3px; letter-spacing: .3px; }
.vsep { width: 1px; height: 26px; background: #e2e2e2; }
.cell { display: flex; justify-content: center; align-items: center; }
.qtext { font-size: 14px; line-height: 20px; white-space: nowrap; }
.app-title { font-size: 15px; line-height: 20px; padding-right: 27px; color: #222; justify-self: end; }

/* tabs */
.tabs { height: 32px; background: #dcdcdc; display: flex; }
.file-tab { width: 91px; margin-right: 2px; padding-right: 3px; background: #4f9fbb; color: #fff; font-size: 15.500px; line-height: 31px; text-align: center; }
.tab { padding: 0 13px; font-size: 16px; line-height: 33px; color: #333; white-space: nowrap; }
.tab.active { background: #fff; color: #1b6f90; border-top: 1px solid #c8c8c8; line-height: 32px; }

/* ribbon */
.ribbon { height: 106px; display: flex; border-bottom: 1px solid #cfcfcf; }
.group { display: flex; flex-direction: column; border-right: 1px solid transparent; position: relative; flex: none; }
.group::after { content: ""; position: absolute; right: -1px; top: 4px; bottom: 4px; width: 1px; background: #e0e0e0; }
.body { height: 84px; display: flex; padding-top: 3px; }
.label { height: 20px; padding-top: 2px; display: flex; align-items: center; justify-content: space-between; color: #1d7897; font-size: 14px; line-height: 18px; white-space: nowrap; }
.label .caret { margin-top: 1px; }
.g1 { width: 200px; } .g2 { width: 411px; } .g3 { width: 193px; } .g4 { width: 104px; }
.g5 { width: 52px; } .g6 { width: 58px; } .g7 { width: 52px; } .g8 { width: 98px; } .g9 { flex: 1; overflow: hidden; }
.g9::after { display: none; }
.lb1 { padding-left: 61px; padding-right: 9px; } .lb1 span { width: 56px; }
.lb2 { padding-left: 180px; padding-right: 9px; } .lb3 { padding-left: 58px; padding-right: 9px; }
.lb4 { padding-left: 1px; padding-right: 9px; } .lb5 { padding-left: 4px; padding-right: 10px; } .lb6 { padding-left: 6px; padding-right: 8px; }
.lb7 { padding-left: 3px; padding-right: 9px; } .lb8 { padding-left: 3px; padding-right: 9px; }

.big { display: flex; flex-direction: column; align-items: center; flex: none; }
.big > svg { margin: 0 0 6px; }
.big > span { font-size: 14px; line-height: 20px; white-space: nowrap; color: #333; }
.big > .caret { margin-top: 5px; }
.sketch-btn { width: 57px; } .b-datum { width: 72px; margin-left: 4px; } .b-extrude { width: 30px; }
.b-hole { width: 52px; } .b-fillet { width: 42px; } .b-move { width: 42px; margin-left: 12px; }
.more { width: 38px; }
.more-box { width: 37px; height: 35px; border: 1px solid #dedede; border-radius: 3px; display: flex; align-items: center; justify-content: center; margin-bottom: 3px; }
.gallery { width: 117px; height: 78px; margin-top: 1px; border: 1px solid #dcdcdc; display: grid; grid-template-columns: repeat(3, 39px); grid-template-rows: 38px 38px; justify-items: center; align-items: center; }
.scroller { width: 22px; height: 80px; display: flex; flex-direction: column; align-items: center; padding-top: 11px; gap: 20px; }
.smalls { display: flex; flex-direction: column; flex: none; margin-top: -3px; }
.small { height: 26px; display: flex; align-items: center; font-size: 14px; white-space: nowrap; }
.small .caret { margin-left: 3px; }
.s-a { width: 86px; } .s-a .small { gap: 5px; }
.s-b { width: 82px; padding-left: 9px; } .s-b .small { gap: 5px; }
.s-c { width: 96px; padding-left: 9px; } .s-c .small { gap: 4px; }

.grid { display: grid; grid-template-rows: 31px 31px; align-items: center; justify-items: center; padding-top: 4px; }
.gr4 { grid-template-columns: 18px 25px 22px 4px 24px; padding-left: 8px; }
.gr5 { grid-template-columns: 22px 22px; padding-left: 4px; }
.gr6 { grid-template-columns: 20px 8px 19px; padding-left: 5px; }
.gr7 { grid-template-columns: 22px 23px; padding-left: 4px; }
.gr8 { grid-template-columns: 22px 23px 23px 24px; padding-left: 4px; }
.gr8 > .gsep { justify-self: start; margin-left: 2px; }
.gr8 > .h7 { margin-left: -13px; justify-self: start; }
.gsep { width: 1px; height: 24px; background: #dedede; }
.h7 { display: flex; flex-direction: column; align-items: center; line-height: 8px; }
.h7 b { font-size: 8.500px; font-weight: 700; color: #666; }
.h7i { width: 16px; height: 11px; margin-bottom: 1px; }

/* toolbar */
.toolbar { height: 36px; display: flex; align-items: center; border-bottom: 1px solid #8e8e8e; }
.toolbar > * { flex: none; }
.menu-btn { width: 100px; height: 26px; display: flex; align-items: center; padding-left: 9px; gap: 3px; border-right: 1px solid #e0e0e0; font-size: 14px; white-space: nowrap; }
.menu-btn .caret { margin-left: 4px; }
.select { height: 24px; border: 1px solid #a8a8a8; display: flex; align-items: center; justify-content: space-between; padding: 0 4px 0 2px; font-size: 14px; }
.select .caret { border-left-width: 5px; border-right-width: 5px; border-top-width: 5px; }
.sel1 { width: 167px; margin-left: 12px; } .sel2 { width: 176px; margin-left: 9px; padding-right: 5px; }
.tools {
  margin-left: 4px; display: grid; align-items: center; justify-items: center;
  grid-template-columns: 24px 22px 26px 10px 34px 12px 38px 12px 26px 20px 26px 26px 24px 26px 24px 26px 24px 26px 24px 26px 24px 26px 24px 26px 24px 12px 30px 18px 30px 18px;
}
.on { width: 23px; height: 23px; background: #cfe5ec; display: flex; align-items: center; justify-content: center; }
.tsep { width: 1px; height: 26px; background: #dcdcdc; }

/* main */
.main { display: flex; height: 645px; }
.rail { width: 32px; background: #dcdcdc; border-right: 1px solid #a0a0a0; display: flex; flex-direction: column; flex: none; }
.slot { height: 42px; display: flex; align-items: center; justify-content: center; position: relative; }
.gear { height: 26px; font-size: 18px; line-height: 26px; color: #333; font-family: "DejaVu Sans", sans-serif; margin-bottom: 16px; }
.slot.current { height: 44px; background: #fff; margin-left: 3px; margin-right: -1px; border: 1px solid #bcbcbc; border-right: 0; }
.slot:nth-child(5) { height: 38px; }
.slot:nth-child(6) { margin-top: 15px; }
.slot:nth-child(7) { margin-top: 10px; }
.slot:nth-child(8) { margin-top: 13px; }
.slot:nth-child(10) { height: 44px; }
.slot:nth-child(11) { height: 40px; }

.navigator { width: 384px; flex: none; padding-left: 6px; overflow: hidden; border-right: 1px solid #d0d0d0; }
.nav-title { height: 33px; padding: 0 7px 4px 4px; display: flex; align-items: center; justify-content: space-between; font-size: 15px; color: #333; }
.maxbox { width: 14px; height: 13px; margin-top: 3px; border: 1px solid #222; border-top-width: 2px; }
.table { width: 368px; border: 1px solid #dcdcdc; border-bottom: 0; border-top: 1px solid #dcdcdc; padding-left: 1px; }
.row { height: 24px; display: grid; grid-template-columns: 200px 100px 1fr; border-bottom: 1px solid #ebebeb; font-size: 15px; }
.row:nth-child(even) { background: #fff; }
.row:nth-child(odd) { background: #f9f9f9; }
.row.head { background: #f0f0f0; border-bottom: 1px solid #d4d4d4; height: 23px; }
.c1, .c2, .c3 { display: flex; align-items: center; border-right: 1px solid #e8e8e8; min-width: 0; white-space: nowrap; position: relative; line-height: 22px; }
.c3 { border-right: 0; }
.head .c1 { padding-left: 6px; }
.head .c2, .head .c3 { padding-left: 6px; }
.sort { margin-left: 19px; width: 0; height: 0; border: 6px solid transparent; border-bottom: 6px solid #222; border-top: 0; }
.c2 > svg { margin-left: 6px; width: 13px; height: 13px; }
.root { padding-left: 5px; gap: 3px; }
.root .exp { width: 10px; height: 10px; border: 1px solid #bdbdbd; position: relative; flex: none; }
.root .exp::before { content: ""; position: absolute; left: 1px; right: 1px; top: 3px; height: 1px; background: #222; }
.root .plus-exp::after { content: ""; position: absolute; top: 1px; bottom: 1px; left: 3px; width: 1px; background: #222; }
.root > svg:first-of-type { margin-right: 1px; }
.cam { gap: 0; }
.cam .exp { margin-right: 6px; }
.cam > svg:nth-of-type(1) { width: 13px; height: 13px; margin-right: 2px; }
.cam > span { margin-left: 2px; }
.leaf { padding-left: 40px; gap: 1px; }
.leaf > svg:first-child { width: 13px; height: 13px; }
.leaf::before { content: ""; position: absolute; left: 28px; top: -1px; height: 25px; border-left: 1px dotted #888; }
.leaf::after { content: ""; position: absolute; left: 29px; top: 12px; width: 10px; border-top: 1px dotted #888; }
.leaf.last::before { height: 13px; }
.leaf > span { margin-left: 2px; }
.long > span { letter-spacing: -.15px; }
.dim > span { color: #a6a6a6; }
.strong > span { font-weight: 700; color: #222; }

.graphics { flex: 1; min-width: 0; display: flex; flex-direction: column; }
.doc-tabs { height: 28px; border-bottom: 2px solid #5aa3bd; flex: none; }
.doc-tab { width: 99px; height: 26px; background: #4f9fbb; color: #fff; display: flex; align-items: center; padding-left: 4px; font-size: 17px; }
.doc-tab span { margin-left: 4px; width: 41px; }
.undock { width: 10px; height: 10px; border: 2px solid #fff; border-right-width: 3px; }
.doc-tab b { margin-left: 5px; font-size: 17px; line-height: 20px; }
.canvas { flex: 1; width: 757px; min-height: 0; }
.wm-big { font-family: "Liberation Sans", "Noto Sans CJK SC", sans-serif; font-size: 42px; font-weight: 700; fill: #fff; fill-opacity: .36; }
.wm-small { font-family: "Liberation Sans", sans-serif; font-size: 12px; letter-spacing: 4.800px; fill: #fff; fill-opacity: .55; font-weight: 700; }
```
